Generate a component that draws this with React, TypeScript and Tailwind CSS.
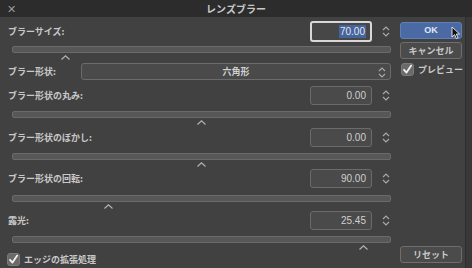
import React from 'react';

const JP = { fontFamily: '"Noto Sans CJK JP", "Noto Sans", sans-serif' };

const Spinner = () => (
  <svg width="8" height="13" viewBox="0 0 8 13" className="text-[#a8a8a8]">
    <path d="M1 5 L4 2 L7 5" fill="none" stroke="currentColor" strokeWidth="1.2" />
    <path d="M1 8 L4 11 L7 8" fill="none" stroke="currentColor" strokeWidth="1.2" />
  </svg>
);

const Caret = ({ x }: { x: number }) => (
  <svg width="9" height="5" viewBox="0 0 9 5" className="absolute top-[8px] text-[#b5b5b5]" style={{ left: x - 4 }}>
    <path d="M0.5 4.5 L4.5 0.8 L8.5 4.5" fill="none" stroke="currentColor" strokeWidth="1.1" />
  </svg>
);

const Slider = ({ thumb, mt }: { thumb: number; mt: string }) => (
  <div className={`relative ml-[12px] w-[379px] h-[7px] rounded-[2px] border border-[#6a6a6a] bg-[#575757] ${mt}`}>
    <Caret x={thumb} />
  </div>
);

const NumRow = ({ label, value, mt, focus }: { label: string; value: string; mt: string; focus?: boolean }) => (
  <div className={`flex items-center h-[19px] ${mt}`}>
    <span className="ml-[8px] text-[9px] font-bold text-[#c9c9c9] w-[302px]">{label}</span>
    <div
      className={
        focus
          ? 'w-[62px] h-[21px] rounded-[3px] border-2 border-[#d8d8d8] bg-[#474747] flex items-center justify-end pr-[4px]'
          : 'w-[62px] h-[19px] rounded-[3px] border border-[#6b6b6b] bg-[#4a4a4a] flex items-center justify-end pr-[5px]'
      }
    >
      <span
        className={
          focus
            ? 'text-[10px] text-[#e6e6e6] bg-[#45639c] px-[1px] leading-[13px]'
            : 'text-[10px] text-[#cfcfcf]'
        }
        style={{ fontFamily: '"Liberation Sans", Arial, sans-serif' }}
      >
        {value}
      </span>
    </div>
    <div className="ml-[10px]">
      <Spinner />
    </div>
  </div>
);

const Check = () => (
  <div className="w-[13px] h-[13px] shrink-0 rounded-[3px] bg-[#6a6a6a] border border-[#7a7a7a] flex items-center justify-center">
    <svg width="11" height="11" viewBox="0 0 11 11">
      <path d="M2 5.8 L4.5 8.6 L9.2 1.6" fill="none" stroke="#f2f2f2" strokeWidth="1.8" strokeLinecap="round" strokeLinejoin="round" />
    </svg>
  </div>
);

export default function App() {
  return (
    <div className="w-[472px] h-[268px] bg-[#363636] overflow-hidden flex flex-col" style={JP}>
      {/* title bar */}
      <div className="h-[17px] bg-[#2c2c2c] flex items-center relative shrink-0">
        <span className="ml-[7px] text-[#9a9a9a] text-[11px] leading-none">✕</span>
        <span className="absolute left-0 right-0 text-center text-[10px] font-bold text-[#c8c8c8]">レンズブラー</span>
      </div>

      <div className="flex flex-1">
        <div className="w-[466px] bg-[#414141] border-r border-[#2e2e2e] flex relative">
          {/* left column */}
          <div className="w-[396px] flex flex-col">
            <NumRow label="ブラーサイズ:" value="70.00" mt="mt-[5px]" focus />
            <Slider thumb={52} mt="mt-[5px]" />

            <div className="flex items-center mt-[10px] h-[17px]">
              <span className="ml-[8px] text-[9px] font-bold text-[#c9c9c9] w-[73px]">ブラー形状:</span>
              <div className="w-[310px] h-[17px] rounded-[3px] border border-[#6b6b6b] bg-[#4a4a4a] flex items-center relative">
                <span className="flex-1 text-center text-[9px] font-bold text-[#d2d2d2]">六角形</span>
                <div className="absolute right-[4px] top-[2px]">
                  <Spinner />
                </div>
              </div>
            </div>

            <NumRow label="ブラー形状の丸み:" value="0.00" mt="mt-[6px]" />
            <Slider thumb={188} mt="mt-[6px]" />

            <NumRow label="ブラー形状のぼかし:" value="0.00" mt="mt-[10px]" />
            <Slider thumb={188} mt="mt-[6px]" />

            <NumRow label="ブラー形状の回転:" value="90.00" mt="mt-[9px]" />
            <Slider thumb={95} mt="mt-[7px]" />

            <NumRow label="露光:" value="25.45" mt="mt-[9px]" />
            <Slider thumb={350} mt="mt-[6px]" />

            <div className="flex items-center mt-[10px] ml-[7px] gap-[4px]">
              <Check />
              <span className="text-[9px] font-bold text-[#c9c9c9]">エッジの拡張処理</span>
            </div>
          </div>

          {/* right column */}
          <div className="w-[62px] ml-[4px] flex flex-col">
            <div className="relative mt-[5px] h-[17px] rounded-[3px] bg-[#4b6aa3] border border-[#5f7fb8] flex items-center justify-center">
              <span className="text-[9px] font-bold text-[#e2e8f4]" style={{ fontFamily: '"Liberation Sans", Arial, sans-serif' }}>OK</span>
              <svg width="10" height="14" viewBox="0 0 10 14" className="absolute left-[50px] top-[3px]">
                <path d="M1 1 L1 11 L3.6 8.6 L5.4 12.6 L7 11.9 L5.3 8 L8.6 8 Z" fill="#111" stroke="#eee" strokeWidth="0.9" strokeLinejoin="round" />
              </svg>
            </div>
            <div className="mt-[3px] h-[17px] rounded-[3px] bg-[#4b4b4b] border border-[#6e6e6e] flex items-center justify-center">
              <span className="text-[9px] font-bold text-[#c9c9c9] whitespace-nowrap">キャンセル</span>
            </div>
            <div className="mt-[4px] flex items-center gap-[4px] ml-[1px]">
              <Check />
              <span className="text-[9px] font-bold text-[#c9c9c9] whitespace-nowrap">プレビュー</span>
            </div>
            <div className="mt-auto mb-[5px] h-[17px] rounded-[3px] bg-[#4b4b4b] border border-[#6e6e6e] flex items-center justify-center">
              <span className="text-[9px] font-bold text-[#c9c9c9]">リセット</span>
            </div>
          </div>
        </div>
        <div className="flex-1 bg-[#383838]" />
      </div>
    </div>
  );
}
